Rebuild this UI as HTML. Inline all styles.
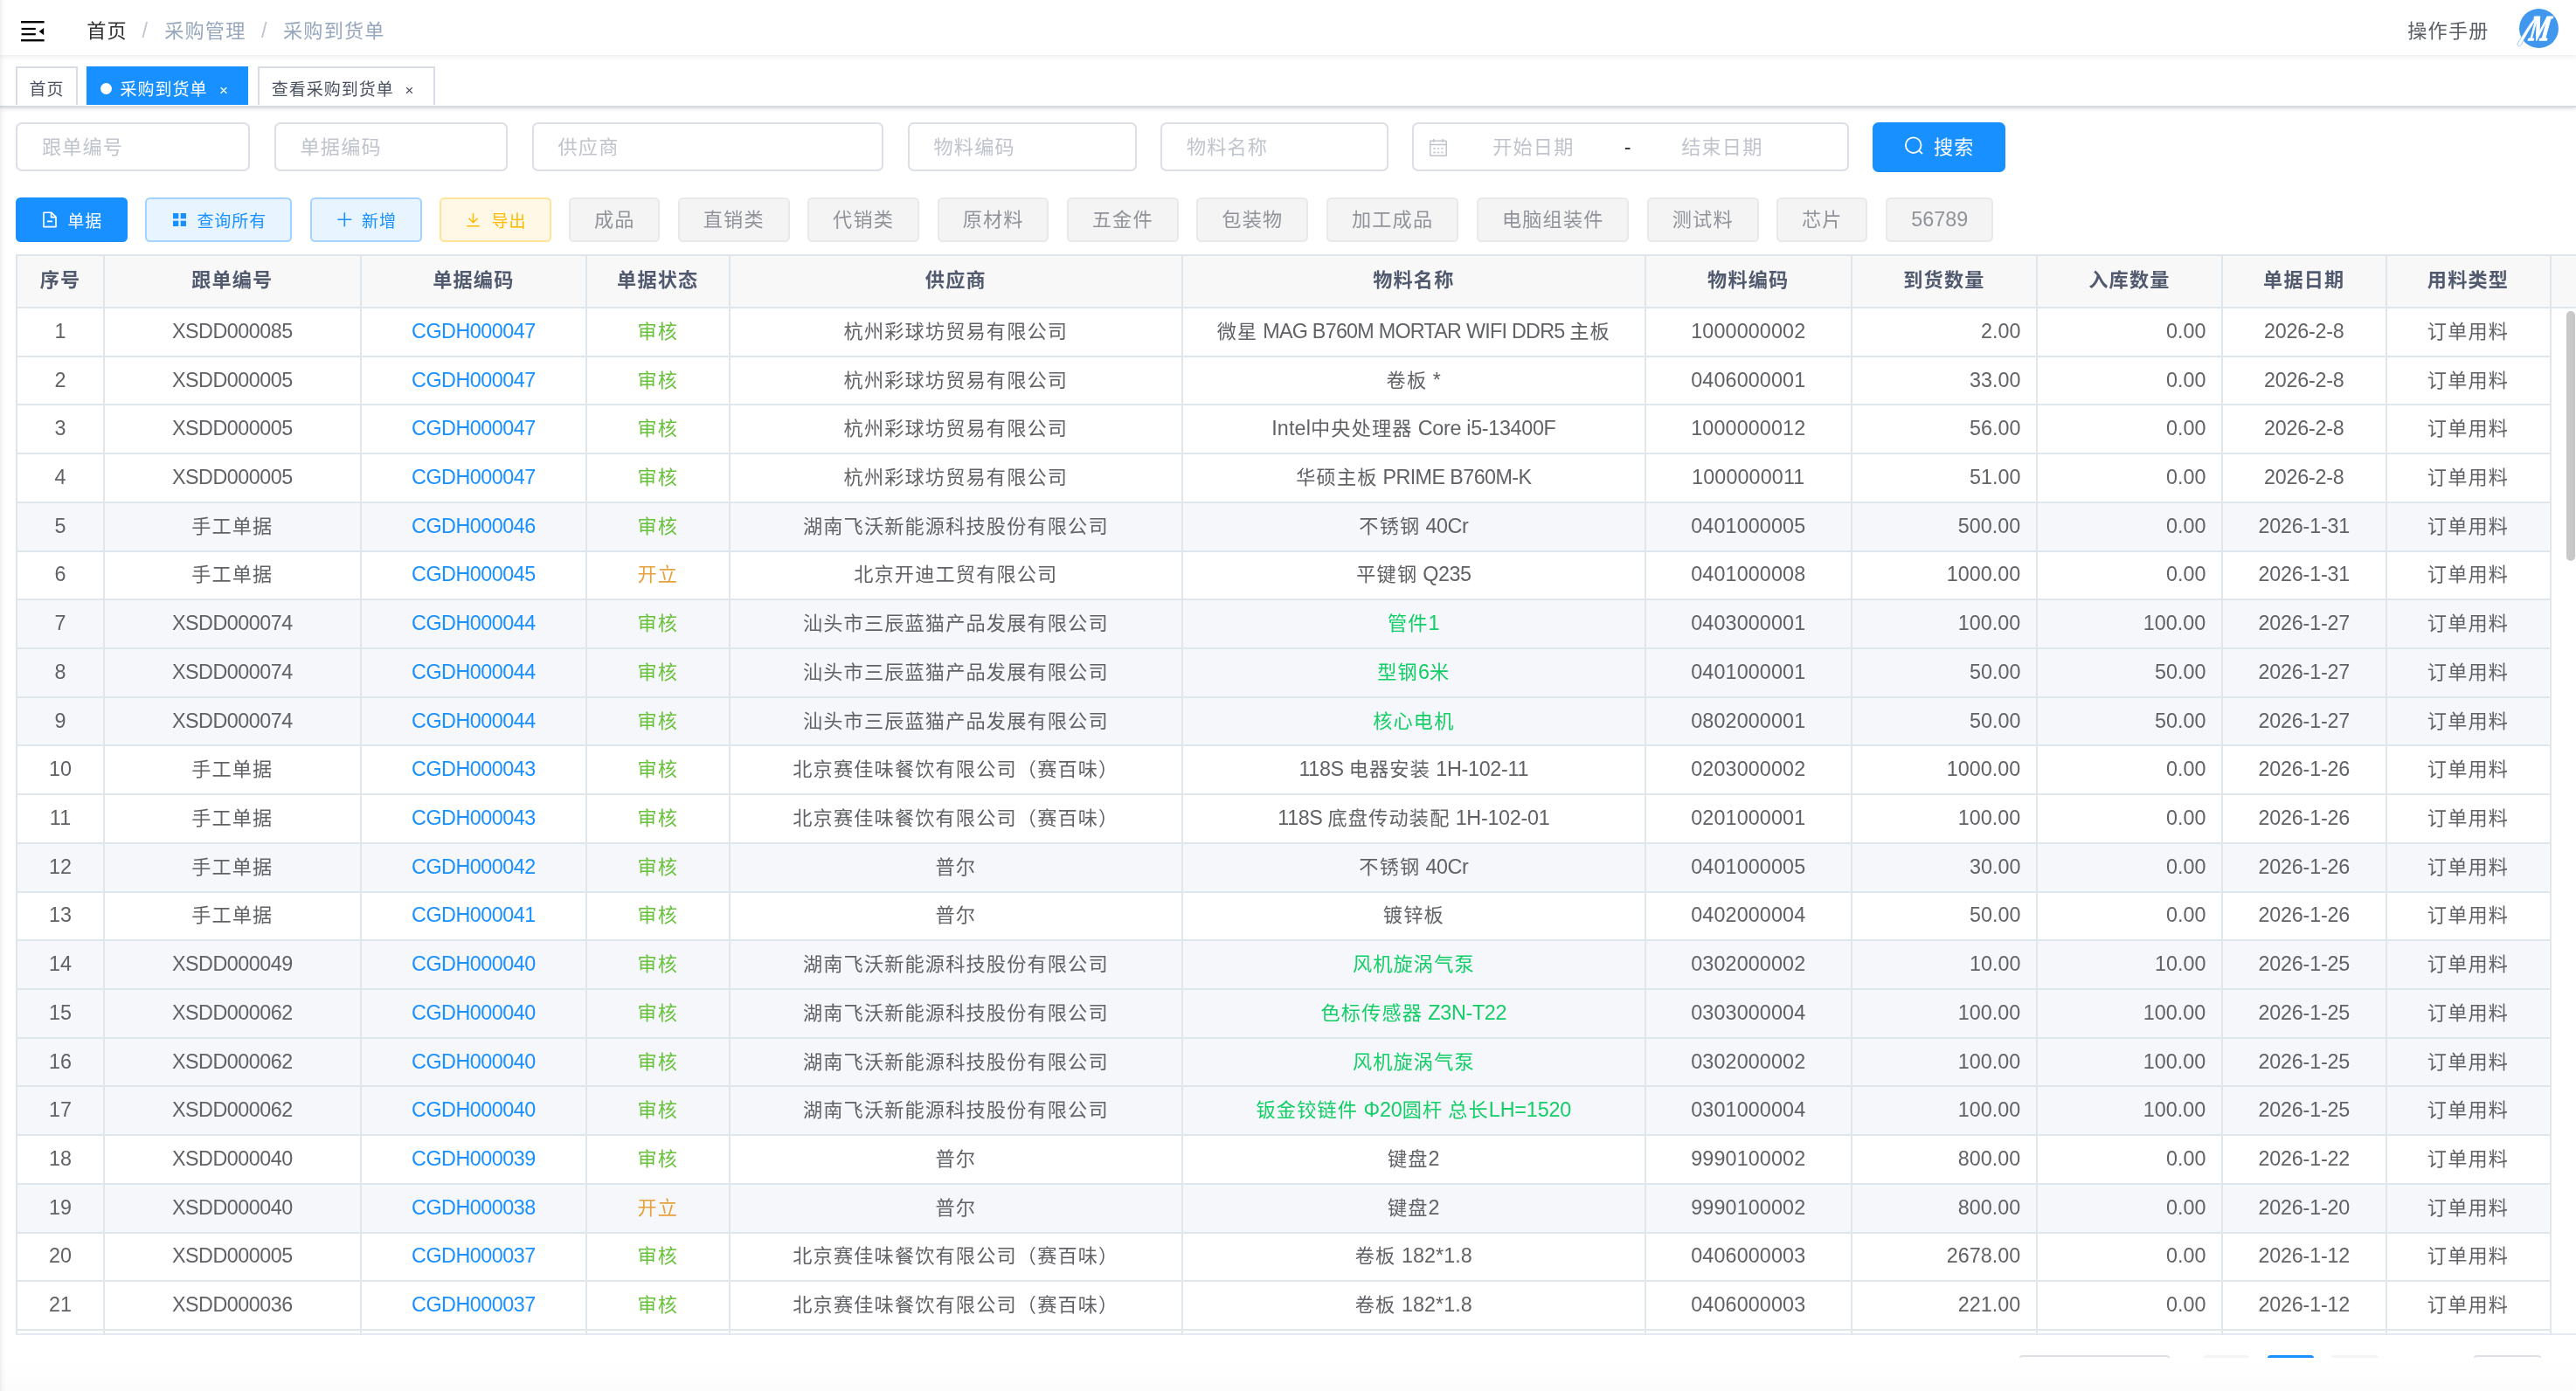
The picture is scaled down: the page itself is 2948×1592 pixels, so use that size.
<!DOCTYPE html>
<html lang="zh-CN"><head><meta charset="utf-8"><title>采购到货单</title>
<style>
html,body{margin:0;padding:0}
body{width:2948px;height:1592px;overflow:hidden;background:#fff;position:relative;will-change:transform;
font-family:"Liberation Sans","Noto Sans CJK SC",sans-serif;font-size:23.33px;color:#606266}
.a{position:absolute;white-space:nowrap}
.k{font-size:.95em;letter-spacing:.0526em}
#nav{z-index:5;left:0;top:0;width:2948px;height:63px;background:#fff;box-shadow:0 1.7px 6.7px rgba(0,21,41,.105)}
#tags{left:0;top:63px;width:2948px;height:58px;background:#fff;border-bottom:2px solid #d5dae4;box-shadow:0 1.7px 5px 0 rgba(0,0,0,.135),0 0 5px 0 rgba(0,0,0,.04)}
#tw{left:0;top:0;width:2948px;height:57px;overflow:hidden}
.bc{top:0;height:70px;line-height:70px;z-index:6}
.z{z-index:6}
.t{top:1.5px}
.tag{top:13px;height:50px;line-height:48px;border:2px solid #d8dce5;background:#fff;color:#495060;font-size:20px;box-sizing:border-box}
.tag.on{background:#1890ff;border-color:#1890ff;color:#fff}
.inp{top:140.2px;height:56.2px;border:2px solid #dcdfe6;border-radius:6.7px;background:#fff;color:#c0c4cc;line-height:52.6px;box-sizing:border-box}
.btn{top:226px;height:50.8px;line-height:46.8px;border:2px solid;border-radius:5.5px;text-align:center;font-size:20px;box-sizing:border-box}
.g{background:#f4f4f5;border-color:#e9e9eb;color:#909399;font-size:23.33px}
.hl{left:18px;height:2px;background:#dfe6ec}
.vl{width:2px;background:#dfe6ec}
.c{height:56px;line-height:56px;text-align:center;overflow:hidden}
.h{font-weight:bold;color:#515a6e;height:58px;line-height:58px;text-align:center}
.r{text-align:right}
.b{color:#1890ff}.gr{color:#67c23a}.or{color:#e6a23c}.mg{color:#13ce66}
</style></head><body>

<div id="nav" class="a"></div>
<svg class="a z" style="left:24.4px;top:24px" width="27" height="24" viewBox="0 0 27 24"><g fill="#000"><rect x="0" y="0" width="26.6" height="2.4"/><rect x="0.6" y="7.9" width="16.2" height="2.2"/><rect x="0.6" y="14.1" width="16.2" height="2.2"/><rect x="0" y="21" width="26.6" height="2.4"/><path d="M26.2 7.9v8.4l-5.6-4.2z"/></g></svg>
<div class="a bc" style="left:99.2px;color:#303133"><span class="k">首页</span></div>
<div class="a bc" style="left:162.5px;color:#c0c4cc">/</div>
<div class="a bc" style="left:188.2px;color:#97a8be"><span class="k">采购管理</span></div>
<div class="a bc" style="left:299px;color:#c0c4cc">/</div>
<div class="a bc" style="left:324px;color:#97a8be"><span class="k">采购到货单</span></div>
<div class="a bc" style="left:2755.3px;color:#5a5e66"><span class="k">操作手册</span></div>
<div class="a z" style="left:2883px;top:9.8px;width:45.4px;height:45.4px;border-radius:50%;background:#4197ee"></div>
<svg class="a z" style="left:2876px;top:6px" width="60" height="54" viewBox="0 0 60 54"><path d="M4.800 44.500C10.500 34.500 17 23.500 24.500 14.500l2.300 1.600C20.500 25.500 14.500 35.500 9.800 44.300c-1.500 2.700-3.500 4.500-5 .2z" fill="#fff" stroke="#4197ee" stroke-width=".5"/><text x="0" y="0" fill="#fff" font-family="Liberation Serif,serif" font-style="italic" font-weight="bold" font-size="41" stroke="#fff" stroke-width="1.300" transform="translate(17.500 40) skewX(-9) scale(.64 1)">M</text></svg>
<div id="tags" class="a"><div id="tw" class="a">
<div class="a tag" style="left:18.2px;width:70.6px;text-align:center"><span class="k">首页</span></div>
<div class="a tag on" style="left:99px;width:184.8px"><span class="a" style="left:14px;top:16.5px;width:13.4px;height:13.4px;border-radius:50%;background:#fff"></span><span class="a" style="left:36.6px"><span class="k">采购到货单</span></span><span class="a" style="left:150px;top:2px;font-size:17px">×</span></div>
<div class="a tag" style="left:295px;width:202.5px"><span class="a" style="left:13.8px"><span class="k">查看采购到货单</span></span><span class="a" style="left:166.5px;top:2px;font-size:17px">×</span></div>
</div></div>
<div class="a inp" style="left:18.4px;width:267.9px"><span class="a" style="left:27.5px"><span class="k">跟单编号</span></span></div>
<div class="a inp" style="left:314px;width:267.2px"><span class="a" style="left:27.5px"><span class="k">单据编码</span></span></div>
<div class="a inp" style="left:609px;width:402.2px"><span class="a" style="left:27.5px"><span class="k">供应商</span></span></div>
<div class="a inp" style="left:1039px;width:261.6px"><span class="a" style="left:27.5px"><span class="k">物料编码</span></span></div>
<div class="a inp" style="left:1328.4px;width:260.9px"><span class="a" style="left:27.5px"><span class="k">物料名称</span></span></div>
<div class="a inp" style="left:1616.2px;width:499.4px"><span class="a" style="left:90px"><span class="k">开始日期</span></span><span class="a" style="left:240.5px;color:#303133">-</span><span class="a" style="left:306px"><span class="k">结束日期</span></span></div>
<svg class="a" style="left:1634px;top:157px" width="24" height="24" viewBox="0 0 24 24" fill="none" stroke="#c0c4cc" stroke-width="1.5"><rect x="2.750" y="4.150" width="18.450" height="17.200" rx="0.500"/><path d="M2.750 8.500h18.450M6.700 2v3.800M17.100 2v3.800M6.200 12.900h2.600M10.800 12.900h2.400M15.200 12.900h2.500M6.200 17.400h2.600M10.800 17.400h2.400M15.200 17.400h2.500"/></svg>
<div class="a" style="left:2143px;top:139.8px;width:152px;height:57.1px;border-radius:6.5px;background:#1890ff;color:#fff;line-height:57px"><svg class="a" style="left:35px;top:15.5px" width="25" height="25" viewBox="0 0 25 25" fill="none" stroke="#fff" stroke-width="1.8"><circle cx="11.7" cy="11.2" r="8.8"/><path d="M18.2 17.4l3.8 3.8"/></svg><span class="a" style="left:70px"><span class="k">搜索</span></span></div>
<div class="a btn" style="left:18.1px;width:127.8px;background:#1890ff;border-color:#1890ff;color:#fff"><svg class="a" style="left:28px;top:13px" width="20" height="22" viewBox="0 0 20 22" fill="none" stroke="#fff" stroke-width="1.7" stroke-linejoin="round"><path d="M2 2.250H10.900L16 7.400V18.550H2zM10.600 2.600V7.700H15.700M6 12.400H12"/></svg><span class="a t" style="left:57.2px"><span class="k">单据</span></span></div>
<div class="a btn" style="left:166.2px;width:168.3px;background:#e8f4ff;border-color:#a3d3ff;color:#1890ff"><svg class="a" style="left:29.5px;top:16.2px" width="16" height="16" viewBox="0 0 16 16" fill="#1890ff"><rect x="0" y="0" width="6.300" height="6.300"/><rect x="8.700" y="0" width="6.300" height="6.300"/><rect x="0" y="8.700" width="6.300" height="6.300"/><rect x="8.700" y="8.700" width="6.300" height="6.300"/></svg><span class="a t" style="left:57.2px"><span class="k">查询所有</span></span></div>
<div class="a btn" style="left:355.1px;width:127.5px;background:#e8f4ff;border-color:#a3d3ff;color:#1890ff"><svg class="a" style="left:28.700px;top:15.3px" width="17" height="17" viewBox="0 0 17 17" stroke="#1890ff" stroke-width="1.6"><path d="M8.300 0.300v15.900M0.300 8.300h15.900"/></svg><span class="a t" style="left:56.8px"><span class="k">新增</span></span></div>
<div class="a btn" style="left:503px;width:127.5px;background:#fff8e6;border-color:#ffe399;color:#ffba00"><svg class="a" style="left:28.200px;top:15px" width="17" height="18" viewBox="0 0 17 18" fill="none" stroke="#ffba00" stroke-width="1.5"><path d="M8.5 1v10.800M3.500 6.800l5 5 5-5M1.300 15.800h14.400"/></svg><span class="a t" style="left:57.4px"><span class="k">导出</span></span></div>
<div class="a btn g" style="left:651.2px;width:104.3px"><span class="k">成品</span></div>
<div class="a btn g" style="left:776px;width:127.5px"><span class="k">直销类</span></div>
<div class="a btn g" style="left:924px;width:128.2px"><span class="k">代销类</span></div>
<div class="a btn g" style="left:1073px;width:127.3px"><span class="k">原材料</span></div>
<div class="a btn g" style="left:1221px;width:127.5px"><span class="k">五金件</span></div>
<div class="a btn g" style="left:1369.2px;width:128.3px"><span class="k">包装物</span></div>
<div class="a btn g" style="left:1518px;width:151.2px"><span class="k">加工成品</span></div>
<div class="a btn g" style="left:1690.2px;width:174.2px"><span class="k">电脑组装件</span></div>
<div class="a btn g" style="left:1885px;width:127.5px"><span class="k">测试料</span></div>
<div class="a btn g" style="left:2033.2px;width:104.3px"><span class="k">芯片</span></div>
<div class="a btn g" style="left:2158.1px;width:123.4px">56789</div>
<div class="a" style="left:18.4px;top:291.3px;width:2930px;height:59.64999999999998px;background:#f8f8f9"></div>
<div class="a" style="left:18.4px;top:573.83px;width:2899.1px;height:56.72px;background:#f5f7fa"></div>
<div class="a" style="left:18.4px;top:685.27px;width:2899.1px;height:56.72px;background:#f5f7fa"></div>
<div class="a" style="left:18.4px;top:740.99px;width:2899.1px;height:56.72px;background:#f5f7fa"></div>
<div class="a" style="left:18.4px;top:796.71px;width:2899.1px;height:56.72px;background:#f5f7fa"></div>
<div class="a" style="left:18.4px;top:963.87px;width:2899.1px;height:56.72px;background:#f5f7fa"></div>
<div class="a" style="left:18.4px;top:1075.31px;width:2899.1px;height:56.72px;background:#f5f7fa"></div>
<div class="a" style="left:18.4px;top:1131.03px;width:2899.1px;height:56.72px;background:#f5f7fa"></div>
<div class="a" style="left:18.4px;top:1186.75px;width:2899.1px;height:56.72px;background:#f5f7fa"></div>
<div class="a" style="left:18.4px;top:1242.47px;width:2899.1px;height:56.72px;background:#f5f7fa"></div>
<div class="a" style="left:18.4px;top:1353.91px;width:2899.1px;height:56.72px;background:#f5f7fa"></div>
<div class="a h" style="left:20.2px;top:291.30px;width:97.7px"><span class="k">序号</span></div>
<div class="a h" style="left:119.7px;top:291.30px;width:292.2px"><span class="k">跟单编号</span></div>
<div class="a h" style="left:413.7px;top:291.30px;width:256.3px"><span class="k">单据编码</span></div>
<div class="a h" style="left:671.8px;top:291.30px;width:161.9px"><span class="k">单据状态</span></div>
<div class="a h" style="left:835.5px;top:291.30px;width:516.7px"><span class="k">供应商</span></div>
<div class="a h" style="left:1354.0px;top:291.30px;width:527.7px"><span class="k">物料名称</span></div>
<div class="a h" style="left:1883.5px;top:291.30px;width:234.5px"><span class="k">物料编码</span></div>
<div class="a h" style="left:2119.8px;top:291.30px;width:210.2px"><span class="k">到货数量</span></div>
<div class="a h" style="left:2331.8px;top:291.30px;width:210.2px"><span class="k">入库数量</span></div>
<div class="a h" style="left:2543.8px;top:291.30px;width:185.9px"><span class="k">单据日期</span></div>
<div class="a h" style="left:2731.5px;top:291.30px;width:186.0px"><span class="k">用料类型</span></div>
<div class="a c" style="left:20.2px;top:351px;width:97.7px"><span style="letter-spacing:0.0054em">1</span></div>
<div class="a c" style="left:119.7px;top:351px;width:292.2px"><span style="letter-spacing:-0.0214em">XSDD000085</span></div>
<div class="a c b" style="left:413.7px;top:351px;width:256.3px"><span style="letter-spacing:-0.0211em">CGDH000047</span></div>
<div class="a c gr" style="left:671.8px;top:351px;width:161.9px"><span class="k">审核</span></div>
<div class="a c" style="left:835.5px;top:351px;width:516.7px"><span class="k">杭州彩球坊贸易有限公司</span></div>
<div class="a c" style="left:1354.0px;top:351px;width:527.7px"><span class="k">微星</span><span style="letter-spacing:-0.0319em"> MAG B760M MORTAR WIFI DDR5 </span><span class="k">主板</span></div>
<div class="a c" style="left:1883.5px;top:351px;width:234.5px"><span style="letter-spacing:0.0054em">1000000002</span></div>
<div class="a c r" style="left:2119.8px;top:351px;width:192.6px">2.00</div>
<div class="a c r" style="left:2331.8px;top:351px;width:192.6px">0.00</div>
<div class="a c" style="left:2543.8px;top:351px;width:185.9px"><span style="letter-spacing:-0.0103em">2026-2-8</span></div>
<div class="a c" style="left:2731.5px;top:351px;width:186.0px"><span class="k">订单用料</span></div>
<div class="a c" style="left:20.2px;top:407px;width:97.7px"><span style="letter-spacing:0.0054em">2</span></div>
<div class="a c" style="left:119.7px;top:407px;width:292.2px"><span style="letter-spacing:-0.0214em">XSDD000005</span></div>
<div class="a c b" style="left:413.7px;top:407px;width:256.3px"><span style="letter-spacing:-0.0211em">CGDH000047</span></div>
<div class="a c gr" style="left:671.8px;top:407px;width:161.9px"><span class="k">审核</span></div>
<div class="a c" style="left:835.5px;top:407px;width:516.7px"><span class="k">杭州彩球坊贸易有限公司</span></div>
<div class="a c" style="left:1354.0px;top:407px;width:527.7px"><span class="k">卷板</span><span style="letter-spacing:0.0056em"> *</span></div>
<div class="a c" style="left:1883.5px;top:407px;width:234.5px"><span style="letter-spacing:0.0054em">0406000001</span></div>
<div class="a c r" style="left:2119.8px;top:407px;width:192.6px">33.00</div>
<div class="a c r" style="left:2331.8px;top:407px;width:192.6px">0.00</div>
<div class="a c" style="left:2543.8px;top:407px;width:185.9px"><span style="letter-spacing:-0.0103em">2026-2-8</span></div>
<div class="a c" style="left:2731.5px;top:407px;width:186.0px"><span class="k">订单用料</span></div>
<div class="a c" style="left:20.2px;top:462px;width:97.7px"><span style="letter-spacing:0.0054em">3</span></div>
<div class="a c" style="left:119.7px;top:462px;width:292.2px"><span style="letter-spacing:-0.0214em">XSDD000005</span></div>
<div class="a c b" style="left:413.7px;top:462px;width:256.3px"><span style="letter-spacing:-0.0211em">CGDH000047</span></div>
<div class="a c gr" style="left:671.8px;top:462px;width:161.9px"><span class="k">审核</span></div>
<div class="a c" style="left:835.5px;top:462px;width:516.7px"><span class="k">杭州彩球坊贸易有限公司</span></div>
<div class="a c" style="left:1354.0px;top:462px;width:527.7px"><span style="letter-spacing:0.0065em">Intel</span><span class="k">中央处理器</span><span style="letter-spacing:-0.0134em"> Core i5-13400F</span></div>
<div class="a c" style="left:1883.5px;top:462px;width:234.5px"><span style="letter-spacing:0.0054em">1000000012</span></div>
<div class="a c r" style="left:2119.8px;top:462px;width:192.6px">56.00</div>
<div class="a c r" style="left:2331.8px;top:462px;width:192.6px">0.00</div>
<div class="a c" style="left:2543.8px;top:462px;width:185.9px"><span style="letter-spacing:-0.0103em">2026-2-8</span></div>
<div class="a c" style="left:2731.5px;top:462px;width:186.0px"><span class="k">订单用料</span></div>
<div class="a c" style="left:20.2px;top:518px;width:97.7px"><span style="letter-spacing:0.0054em">4</span></div>
<div class="a c" style="left:119.7px;top:518px;width:292.2px"><span style="letter-spacing:-0.0214em">XSDD000005</span></div>
<div class="a c b" style="left:413.7px;top:518px;width:256.3px"><span style="letter-spacing:-0.0211em">CGDH000047</span></div>
<div class="a c gr" style="left:671.8px;top:518px;width:161.9px"><span class="k">审核</span></div>
<div class="a c" style="left:835.5px;top:518px;width:516.7px"><span class="k">杭州彩球坊贸易有限公司</span></div>
<div class="a c" style="left:1354.0px;top:518px;width:527.7px"><span class="k">华硕主板</span><span style="letter-spacing:-0.0252em"> PRIME B760M-K</span></div>
<div class="a c" style="left:1883.5px;top:518px;width:234.5px"><span style="letter-spacing:0.0054em">1000000011</span></div>
<div class="a c r" style="left:2119.8px;top:518px;width:192.6px">51.00</div>
<div class="a c r" style="left:2331.8px;top:518px;width:192.6px">0.00</div>
<div class="a c" style="left:2543.8px;top:518px;width:185.9px"><span style="letter-spacing:-0.0103em">2026-2-8</span></div>
<div class="a c" style="left:2731.5px;top:518px;width:186.0px"><span class="k">订单用料</span></div>
<div class="a c" style="left:20.2px;top:574px;width:97.7px"><span style="letter-spacing:0.0054em">5</span></div>
<div class="a c" style="left:119.7px;top:574px;width:292.2px"><span class="k">手工单据</span></div>
<div class="a c b" style="left:413.7px;top:574px;width:256.3px"><span style="letter-spacing:-0.0211em">CGDH000046</span></div>
<div class="a c gr" style="left:671.8px;top:574px;width:161.9px"><span class="k">审核</span></div>
<div class="a c" style="left:835.5px;top:574px;width:516.7px"><span class="k">湖南飞沃新能源科技股份有限公司</span></div>
<div class="a c" style="left:1354.0px;top:574px;width:527.7px"><span class="k">不锈钢</span><span style="letter-spacing:-0.0171em"> 40Cr</span></div>
<div class="a c" style="left:1883.5px;top:574px;width:234.5px"><span style="letter-spacing:0.0054em">0401000005</span></div>
<div class="a c r" style="left:2119.8px;top:574px;width:192.6px"><span style="letter-spacing:0.0020em">500.00</span></div>
<div class="a c r" style="left:2331.8px;top:574px;width:192.6px">0.00</div>
<div class="a c" style="left:2543.8px;top:574px;width:185.9px"><span style="letter-spacing:-0.0085em">2026-1-31</span></div>
<div class="a c" style="left:2731.5px;top:574px;width:186.0px"><span class="k">订单用料</span></div>
<div class="a c" style="left:20.2px;top:629px;width:97.7px"><span style="letter-spacing:0.0054em">6</span></div>
<div class="a c" style="left:119.7px;top:629px;width:292.2px"><span class="k">手工单据</span></div>
<div class="a c b" style="left:413.7px;top:629px;width:256.3px"><span style="letter-spacing:-0.0211em">CGDH000045</span></div>
<div class="a c or" style="left:671.8px;top:629px;width:161.9px"><span class="k">开立</span></div>
<div class="a c" style="left:835.5px;top:629px;width:516.7px"><span class="k">北京开迪工贸有限公司</span></div>
<div class="a c" style="left:1354.0px;top:629px;width:527.7px"><span class="k">平键钢</span><span style="letter-spacing:-0.0209em"> Q235</span></div>
<div class="a c" style="left:1883.5px;top:629px;width:234.5px"><span style="letter-spacing:0.0054em">0401000008</span></div>
<div class="a c r" style="left:2119.8px;top:629px;width:192.6px"><span style="letter-spacing:0.0025em">1000.00</span></div>
<div class="a c r" style="left:2331.8px;top:629px;width:192.6px">0.00</div>
<div class="a c" style="left:2543.8px;top:629px;width:185.9px"><span style="letter-spacing:-0.0085em">2026-1-31</span></div>
<div class="a c" style="left:2731.5px;top:629px;width:186.0px"><span class="k">订单用料</span></div>
<div class="a c" style="left:20.2px;top:685px;width:97.7px"><span style="letter-spacing:0.0054em">7</span></div>
<div class="a c" style="left:119.7px;top:685px;width:292.2px"><span style="letter-spacing:-0.0214em">XSDD000074</span></div>
<div class="a c b" style="left:413.7px;top:685px;width:256.3px"><span style="letter-spacing:-0.0211em">CGDH000044</span></div>
<div class="a c gr" style="left:671.8px;top:685px;width:161.9px"><span class="k">审核</span></div>
<div class="a c" style="left:835.5px;top:685px;width:516.7px"><span class="k">汕头市三辰蓝猫产品发展有限公司</span></div>
<div class="a c mg" style="left:1354.0px;top:685px;width:527.7px"><span class="k">管件</span><span style="letter-spacing:0.0054em">1</span></div>
<div class="a c" style="left:1883.5px;top:685px;width:234.5px"><span style="letter-spacing:0.0054em">0403000001</span></div>
<div class="a c r" style="left:2119.8px;top:685px;width:192.6px"><span style="letter-spacing:0.0020em">100.00</span></div>
<div class="a c r" style="left:2331.8px;top:685px;width:192.6px"><span style="letter-spacing:0.0020em">100.00</span></div>
<div class="a c" style="left:2543.8px;top:685px;width:185.9px"><span style="letter-spacing:-0.0085em">2026-1-27</span></div>
<div class="a c" style="left:2731.5px;top:685px;width:186.0px"><span class="k">订单用料</span></div>
<div class="a c" style="left:20.2px;top:741px;width:97.7px"><span style="letter-spacing:0.0054em">8</span></div>
<div class="a c" style="left:119.7px;top:741px;width:292.2px"><span style="letter-spacing:-0.0214em">XSDD000074</span></div>
<div class="a c b" style="left:413.7px;top:741px;width:256.3px"><span style="letter-spacing:-0.0211em">CGDH000044</span></div>
<div class="a c gr" style="left:671.8px;top:741px;width:161.9px"><span class="k">审核</span></div>
<div class="a c" style="left:835.5px;top:741px;width:516.7px"><span class="k">汕头市三辰蓝猫产品发展有限公司</span></div>
<div class="a c mg" style="left:1354.0px;top:741px;width:527.7px"><span class="k">型钢</span><span style="letter-spacing:0.0054em">6</span><span class="k">米</span></div>
<div class="a c" style="left:1883.5px;top:741px;width:234.5px"><span style="letter-spacing:0.0054em">0401000001</span></div>
<div class="a c r" style="left:2119.8px;top:741px;width:192.6px">50.00</div>
<div class="a c r" style="left:2331.8px;top:741px;width:192.6px">50.00</div>
<div class="a c" style="left:2543.8px;top:741px;width:185.9px"><span style="letter-spacing:-0.0085em">2026-1-27</span></div>
<div class="a c" style="left:2731.5px;top:741px;width:186.0px"><span class="k">订单用料</span></div>
<div class="a c" style="left:20.2px;top:797px;width:97.7px"><span style="letter-spacing:0.0054em">9</span></div>
<div class="a c" style="left:119.7px;top:797px;width:292.2px"><span style="letter-spacing:-0.0214em">XSDD000074</span></div>
<div class="a c b" style="left:413.7px;top:797px;width:256.3px"><span style="letter-spacing:-0.0211em">CGDH000044</span></div>
<div class="a c gr" style="left:671.8px;top:797px;width:161.9px"><span class="k">审核</span></div>
<div class="a c" style="left:835.5px;top:797px;width:516.7px"><span class="k">汕头市三辰蓝猫产品发展有限公司</span></div>
<div class="a c mg" style="left:1354.0px;top:797px;width:527.7px"><span class="k">核心电机</span></div>
<div class="a c" style="left:1883.5px;top:797px;width:234.5px"><span style="letter-spacing:0.0054em">0802000001</span></div>
<div class="a c r" style="left:2119.8px;top:797px;width:192.6px">50.00</div>
<div class="a c r" style="left:2331.8px;top:797px;width:192.6px">50.00</div>
<div class="a c" style="left:2543.8px;top:797px;width:185.9px"><span style="letter-spacing:-0.0085em">2026-1-27</span></div>
<div class="a c" style="left:2731.5px;top:797px;width:186.0px"><span class="k">订单用料</span></div>
<div class="a c" style="left:20.2px;top:852px;width:97.7px"><span style="letter-spacing:0.0054em">10</span></div>
<div class="a c" style="left:119.7px;top:852px;width:292.2px"><span class="k">手工单据</span></div>
<div class="a c b" style="left:413.7px;top:852px;width:256.3px"><span style="letter-spacing:-0.0211em">CGDH000043</span></div>
<div class="a c gr" style="left:671.8px;top:852px;width:161.9px"><span class="k">审核</span></div>
<div class="a c" style="left:835.5px;top:852px;width:516.7px"><span class="k">北京赛佳味餐饮有限公司（赛百味）</span></div>
<div class="a c" style="left:1354.0px;top:852px;width:527.7px"><span style="letter-spacing:-0.0176em">118S </span><span class="k">电器安装</span><span style="letter-spacing:-0.0122em"> 1H-102-11</span></div>
<div class="a c" style="left:1883.5px;top:852px;width:234.5px"><span style="letter-spacing:0.0054em">0203000002</span></div>
<div class="a c r" style="left:2119.8px;top:852px;width:192.6px"><span style="letter-spacing:0.0025em">1000.00</span></div>
<div class="a c r" style="left:2331.8px;top:852px;width:192.6px">0.00</div>
<div class="a c" style="left:2543.8px;top:852px;width:185.9px"><span style="letter-spacing:-0.0085em">2026-1-26</span></div>
<div class="a c" style="left:2731.5px;top:852px;width:186.0px"><span class="k">订单用料</span></div>
<div class="a c" style="left:20.2px;top:908px;width:97.7px"><span style="letter-spacing:0.0054em">11</span></div>
<div class="a c" style="left:119.7px;top:908px;width:292.2px"><span class="k">手工单据</span></div>
<div class="a c b" style="left:413.7px;top:908px;width:256.3px"><span style="letter-spacing:-0.0211em">CGDH000043</span></div>
<div class="a c gr" style="left:671.8px;top:908px;width:161.9px"><span class="k">审核</span></div>
<div class="a c" style="left:835.5px;top:908px;width:516.7px"><span class="k">北京赛佳味餐饮有限公司（赛百味）</span></div>
<div class="a c" style="left:1354.0px;top:908px;width:527.7px"><span style="letter-spacing:-0.0176em">118S </span><span class="k">底盘传动装配</span><span style="letter-spacing:-0.0122em"> 1H-102-01</span></div>
<div class="a c" style="left:1883.5px;top:908px;width:234.5px"><span style="letter-spacing:0.0054em">0201000001</span></div>
<div class="a c r" style="left:2119.8px;top:908px;width:192.6px"><span style="letter-spacing:0.0020em">100.00</span></div>
<div class="a c r" style="left:2331.8px;top:908px;width:192.6px">0.00</div>
<div class="a c" style="left:2543.8px;top:908px;width:185.9px"><span style="letter-spacing:-0.0085em">2026-1-26</span></div>
<div class="a c" style="left:2731.5px;top:908px;width:186.0px"><span class="k">订单用料</span></div>
<div class="a c" style="left:20.2px;top:964px;width:97.7px"><span style="letter-spacing:0.0054em">12</span></div>
<div class="a c" style="left:119.7px;top:964px;width:292.2px"><span class="k">手工单据</span></div>
<div class="a c b" style="left:413.7px;top:964px;width:256.3px"><span style="letter-spacing:-0.0211em">CGDH000042</span></div>
<div class="a c gr" style="left:671.8px;top:964px;width:161.9px"><span class="k">审核</span></div>
<div class="a c" style="left:835.5px;top:964px;width:516.7px"><span class="k">普尔</span></div>
<div class="a c" style="left:1354.0px;top:964px;width:527.7px"><span class="k">不锈钢</span><span style="letter-spacing:-0.0171em"> 40Cr</span></div>
<div class="a c" style="left:1883.5px;top:964px;width:234.5px"><span style="letter-spacing:0.0054em">0401000005</span></div>
<div class="a c r" style="left:2119.8px;top:964px;width:192.6px">30.00</div>
<div class="a c r" style="left:2331.8px;top:964px;width:192.6px">0.00</div>
<div class="a c" style="left:2543.8px;top:964px;width:185.9px"><span style="letter-spacing:-0.0085em">2026-1-26</span></div>
<div class="a c" style="left:2731.5px;top:964px;width:186.0px"><span class="k">订单用料</span></div>
<div class="a c" style="left:20.2px;top:1019px;width:97.7px"><span style="letter-spacing:0.0054em">13</span></div>
<div class="a c" style="left:119.7px;top:1019px;width:292.2px"><span class="k">手工单据</span></div>
<div class="a c b" style="left:413.7px;top:1019px;width:256.3px"><span style="letter-spacing:-0.0211em">CGDH000041</span></div>
<div class="a c gr" style="left:671.8px;top:1019px;width:161.9px"><span class="k">审核</span></div>
<div class="a c" style="left:835.5px;top:1019px;width:516.7px"><span class="k">普尔</span></div>
<div class="a c" style="left:1354.0px;top:1019px;width:527.7px"><span class="k">镀锌板</span></div>
<div class="a c" style="left:1883.5px;top:1019px;width:234.5px"><span style="letter-spacing:0.0054em">0402000004</span></div>
<div class="a c r" style="left:2119.8px;top:1019px;width:192.6px">50.00</div>
<div class="a c r" style="left:2331.8px;top:1019px;width:192.6px">0.00</div>
<div class="a c" style="left:2543.8px;top:1019px;width:185.9px"><span style="letter-spacing:-0.0085em">2026-1-26</span></div>
<div class="a c" style="left:2731.5px;top:1019px;width:186.0px"><span class="k">订单用料</span></div>
<div class="a c" style="left:20.2px;top:1075px;width:97.7px"><span style="letter-spacing:0.0054em">14</span></div>
<div class="a c" style="left:119.7px;top:1075px;width:292.2px"><span style="letter-spacing:-0.0214em">XSDD000049</span></div>
<div class="a c b" style="left:413.7px;top:1075px;width:256.3px"><span style="letter-spacing:-0.0211em">CGDH000040</span></div>
<div class="a c gr" style="left:671.8px;top:1075px;width:161.9px"><span class="k">审核</span></div>
<div class="a c" style="left:835.5px;top:1075px;width:516.7px"><span class="k">湖南飞沃新能源科技股份有限公司</span></div>
<div class="a c mg" style="left:1354.0px;top:1075px;width:527.7px"><span class="k">风机旋涡气泵</span></div>
<div class="a c" style="left:1883.5px;top:1075px;width:234.5px"><span style="letter-spacing:0.0054em">0302000002</span></div>
<div class="a c r" style="left:2119.8px;top:1075px;width:192.6px">10.00</div>
<div class="a c r" style="left:2331.8px;top:1075px;width:192.6px">10.00</div>
<div class="a c" style="left:2543.8px;top:1075px;width:185.9px"><span style="letter-spacing:-0.0085em">2026-1-25</span></div>
<div class="a c" style="left:2731.5px;top:1075px;width:186.0px"><span class="k">订单用料</span></div>
<div class="a c" style="left:20.2px;top:1131px;width:97.7px"><span style="letter-spacing:0.0054em">15</span></div>
<div class="a c" style="left:119.7px;top:1131px;width:292.2px"><span style="letter-spacing:-0.0214em">XSDD000062</span></div>
<div class="a c b" style="left:413.7px;top:1131px;width:256.3px"><span style="letter-spacing:-0.0211em">CGDH000040</span></div>
<div class="a c gr" style="left:671.8px;top:1131px;width:161.9px"><span class="k">审核</span></div>
<div class="a c" style="left:835.5px;top:1131px;width:516.7px"><span class="k">湖南飞沃新能源科技股份有限公司</span></div>
<div class="a c mg" style="left:1354.0px;top:1131px;width:527.7px"><span class="k">色标传感器</span><span style="letter-spacing:-0.0134em"> Z3N-T22</span></div>
<div class="a c" style="left:1883.5px;top:1131px;width:234.5px"><span style="letter-spacing:0.0054em">0303000004</span></div>
<div class="a c r" style="left:2119.8px;top:1131px;width:192.6px"><span style="letter-spacing:0.0020em">100.00</span></div>
<div class="a c r" style="left:2331.8px;top:1131px;width:192.6px"><span style="letter-spacing:0.0020em">100.00</span></div>
<div class="a c" style="left:2543.8px;top:1131px;width:185.9px"><span style="letter-spacing:-0.0085em">2026-1-25</span></div>
<div class="a c" style="left:2731.5px;top:1131px;width:186.0px"><span class="k">订单用料</span></div>
<div class="a c" style="left:20.2px;top:1187px;width:97.7px"><span style="letter-spacing:0.0054em">16</span></div>
<div class="a c" style="left:119.7px;top:1187px;width:292.2px"><span style="letter-spacing:-0.0214em">XSDD000062</span></div>
<div class="a c b" style="left:413.7px;top:1187px;width:256.3px"><span style="letter-spacing:-0.0211em">CGDH000040</span></div>
<div class="a c gr" style="left:671.8px;top:1187px;width:161.9px"><span class="k">审核</span></div>
<div class="a c" style="left:835.5px;top:1187px;width:516.7px"><span class="k">湖南飞沃新能源科技股份有限公司</span></div>
<div class="a c mg" style="left:1354.0px;top:1187px;width:527.7px"><span class="k">风机旋涡气泵</span></div>
<div class="a c" style="left:1883.5px;top:1187px;width:234.5px"><span style="letter-spacing:0.0054em">0302000002</span></div>
<div class="a c r" style="left:2119.8px;top:1187px;width:192.6px"><span style="letter-spacing:0.0020em">100.00</span></div>
<div class="a c r" style="left:2331.8px;top:1187px;width:192.6px"><span style="letter-spacing:0.0020em">100.00</span></div>
<div class="a c" style="left:2543.8px;top:1187px;width:185.9px"><span style="letter-spacing:-0.0085em">2026-1-25</span></div>
<div class="a c" style="left:2731.5px;top:1187px;width:186.0px"><span class="k">订单用料</span></div>
<div class="a c" style="left:20.2px;top:1242px;width:97.7px"><span style="letter-spacing:0.0054em">17</span></div>
<div class="a c" style="left:119.7px;top:1242px;width:292.2px"><span style="letter-spacing:-0.0214em">XSDD000062</span></div>
<div class="a c b" style="left:413.7px;top:1242px;width:256.3px"><span style="letter-spacing:-0.0211em">CGDH000040</span></div>
<div class="a c gr" style="left:671.8px;top:1242px;width:161.9px"><span class="k">审核</span></div>
<div class="a c" style="left:835.5px;top:1242px;width:516.7px"><span class="k">湖南飞沃新能源科技股份有限公司</span></div>
<div class="a c mg" style="left:1354.0px;top:1242px;width:527.7px"><span class="k">钣金铰链件</span><span style="letter-spacing:-0.0049em"> Φ20</span><span class="k">圆杆</span><span style="letter-spacing:-0.0303em"> </span><span class="k">总长</span><span style="letter-spacing:-0.0059em">LH=1520</span></div>
<div class="a c" style="left:1883.5px;top:1242px;width:234.5px"><span style="letter-spacing:0.0054em">0301000004</span></div>
<div class="a c r" style="left:2119.8px;top:1242px;width:192.6px"><span style="letter-spacing:0.0020em">100.00</span></div>
<div class="a c r" style="left:2331.8px;top:1242px;width:192.6px"><span style="letter-spacing:0.0020em">100.00</span></div>
<div class="a c" style="left:2543.8px;top:1242px;width:185.9px"><span style="letter-spacing:-0.0085em">2026-1-25</span></div>
<div class="a c" style="left:2731.5px;top:1242px;width:186.0px"><span class="k">订单用料</span></div>
<div class="a c" style="left:20.2px;top:1298px;width:97.7px"><span style="letter-spacing:0.0054em">18</span></div>
<div class="a c" style="left:119.7px;top:1298px;width:292.2px"><span style="letter-spacing:-0.0214em">XSDD000040</span></div>
<div class="a c b" style="left:413.7px;top:1298px;width:256.3px"><span style="letter-spacing:-0.0211em">CGDH000039</span></div>
<div class="a c gr" style="left:671.8px;top:1298px;width:161.9px"><span class="k">审核</span></div>
<div class="a c" style="left:835.5px;top:1298px;width:516.7px"><span class="k">普尔</span></div>
<div class="a c" style="left:1354.0px;top:1298px;width:527.7px"><span class="k">键盘</span><span style="letter-spacing:0.0054em">2</span></div>
<div class="a c" style="left:1883.5px;top:1298px;width:234.5px"><span style="letter-spacing:0.0054em">9990100002</span></div>
<div class="a c r" style="left:2119.8px;top:1298px;width:192.6px"><span style="letter-spacing:0.0020em">800.00</span></div>
<div class="a c r" style="left:2331.8px;top:1298px;width:192.6px">0.00</div>
<div class="a c" style="left:2543.8px;top:1298px;width:185.9px"><span style="letter-spacing:-0.0085em">2026-1-22</span></div>
<div class="a c" style="left:2731.5px;top:1298px;width:186.0px"><span class="k">订单用料</span></div>
<div class="a c" style="left:20.2px;top:1354px;width:97.7px"><span style="letter-spacing:0.0054em">19</span></div>
<div class="a c" style="left:119.7px;top:1354px;width:292.2px"><span style="letter-spacing:-0.0214em">XSDD000040</span></div>
<div class="a c b" style="left:413.7px;top:1354px;width:256.3px"><span style="letter-spacing:-0.0211em">CGDH000038</span></div>
<div class="a c or" style="left:671.8px;top:1354px;width:161.9px"><span class="k">开立</span></div>
<div class="a c" style="left:835.5px;top:1354px;width:516.7px"><span class="k">普尔</span></div>
<div class="a c" style="left:1354.0px;top:1354px;width:527.7px"><span class="k">键盘</span><span style="letter-spacing:0.0054em">2</span></div>
<div class="a c" style="left:1883.5px;top:1354px;width:234.5px"><span style="letter-spacing:0.0054em">9990100002</span></div>
<div class="a c r" style="left:2119.8px;top:1354px;width:192.6px"><span style="letter-spacing:0.0020em">800.00</span></div>
<div class="a c r" style="left:2331.8px;top:1354px;width:192.6px">0.00</div>
<div class="a c" style="left:2543.8px;top:1354px;width:185.9px"><span style="letter-spacing:-0.0085em">2026-1-20</span></div>
<div class="a c" style="left:2731.5px;top:1354px;width:186.0px"><span class="k">订单用料</span></div>
<div class="a c" style="left:20.2px;top:1409px;width:97.7px"><span style="letter-spacing:0.0054em">20</span></div>
<div class="a c" style="left:119.7px;top:1409px;width:292.2px"><span style="letter-spacing:-0.0214em">XSDD000005</span></div>
<div class="a c b" style="left:413.7px;top:1409px;width:256.3px"><span style="letter-spacing:-0.0211em">CGDH000037</span></div>
<div class="a c gr" style="left:671.8px;top:1409px;width:161.9px"><span class="k">审核</span></div>
<div class="a c" style="left:835.5px;top:1409px;width:516.7px"><span class="k">北京赛佳味餐饮有限公司（赛百味）</span></div>
<div class="a c" style="left:1354.0px;top:1409px;width:527.7px"><span class="k">卷板</span><span style="letter-spacing:0.0029em"> 182*1.8</span></div>
<div class="a c" style="left:1883.5px;top:1409px;width:234.5px"><span style="letter-spacing:0.0054em">0406000003</span></div>
<div class="a c r" style="left:2119.8px;top:1409px;width:192.6px"><span style="letter-spacing:0.0025em">2678.00</span></div>
<div class="a c r" style="left:2331.8px;top:1409px;width:192.6px">0.00</div>
<div class="a c" style="left:2543.8px;top:1409px;width:185.9px"><span style="letter-spacing:-0.0085em">2026-1-12</span></div>
<div class="a c" style="left:2731.5px;top:1409px;width:186.0px"><span class="k">订单用料</span></div>
<div class="a c" style="left:20.2px;top:1465px;width:97.7px"><span style="letter-spacing:0.0054em">21</span></div>
<div class="a c" style="left:119.7px;top:1465px;width:292.2px"><span style="letter-spacing:-0.0214em">XSDD000036</span></div>
<div class="a c b" style="left:413.7px;top:1465px;width:256.3px"><span style="letter-spacing:-0.0211em">CGDH000037</span></div>
<div class="a c gr" style="left:671.8px;top:1465px;width:161.9px"><span class="k">审核</span></div>
<div class="a c" style="left:835.5px;top:1465px;width:516.7px"><span class="k">北京赛佳味餐饮有限公司（赛百味）</span></div>
<div class="a c" style="left:1354.0px;top:1465px;width:527.7px"><span class="k">卷板</span><span style="letter-spacing:0.0029em"> 182*1.8</span></div>
<div class="a c" style="left:1883.5px;top:1465px;width:234.5px"><span style="letter-spacing:0.0054em">0406000003</span></div>
<div class="a c r" style="left:2119.8px;top:1465px;width:192.6px"><span style="letter-spacing:0.0020em">221.00</span></div>
<div class="a c r" style="left:2331.8px;top:1465px;width:192.6px">0.00</div>
<div class="a c" style="left:2543.8px;top:1465px;width:185.9px"><span style="letter-spacing:-0.0085em">2026-1-12</span></div>
<div class="a c" style="left:2731.5px;top:1465px;width:186.0px"><span class="k">订单用料</span></div>
<div class="a hl" style="top:291px;width:2930px"></div>
<div class="a hl" style="top:351px;width:2930px"></div>
<div class="a hl" style="top:407px;width:2902px"></div>
<div class="a hl" style="top:462px;width:2902px"></div>
<div class="a hl" style="top:518px;width:2902px"></div>
<div class="a hl" style="top:574px;width:2902px"></div>
<div class="a hl" style="top:630px;width:2902px"></div>
<div class="a hl" style="top:685px;width:2902px"></div>
<div class="a hl" style="top:741px;width:2902px"></div>
<div class="a hl" style="top:797px;width:2902px"></div>
<div class="a hl" style="top:852px;width:2902px"></div>
<div class="a hl" style="top:908px;width:2902px"></div>
<div class="a hl" style="top:964px;width:2902px"></div>
<div class="a hl" style="top:1020px;width:2902px"></div>
<div class="a hl" style="top:1075px;width:2902px"></div>
<div class="a hl" style="top:1131px;width:2902px"></div>
<div class="a hl" style="top:1187px;width:2902px"></div>
<div class="a hl" style="top:1242px;width:2902px"></div>
<div class="a hl" style="top:1298px;width:2902px"></div>
<div class="a hl" style="top:1354px;width:2902px"></div>
<div class="a hl" style="top:1410px;width:2902px"></div>
<div class="a hl" style="top:1465px;width:2902px"></div>
<div class="a hl" style="top:1521px;width:2902px"></div>
<div class="a hl" style="top:1526px;width:2930px;background:#e4e9f2"></div>
<div class="a vl" style="left:18px;top:291px;height:1237px"></div>
<div class="a vl" style="left:118px;top:291px;height:1237px"></div>
<div class="a vl" style="left:412px;top:291px;height:1237px"></div>
<div class="a vl" style="left:670px;top:291px;height:1237px"></div>
<div class="a vl" style="left:834px;top:291px;height:1237px"></div>
<div class="a vl" style="left:1352px;top:291px;height:1237px"></div>
<div class="a vl" style="left:1882px;top:291px;height:1237px"></div>
<div class="a vl" style="left:2118px;top:291px;height:1237px"></div>
<div class="a vl" style="left:2330px;top:291px;height:1237px"></div>
<div class="a vl" style="left:2542px;top:291px;height:1237px"></div>
<div class="a vl" style="left:2730px;top:291px;height:1237px"></div>
<div class="a vl" style="left:2918px;top:291px;height:1237px"></div>
<div class="a" style="left:2937px;top:355.5px;width:10px;height:286.5px;border-radius:5px;background:#c8c8c8"></div>
<div class="a" style="left:0;top:1528.5px;width:2948px;height:64px;background:#fff"></div>
<div class="a" style="left:0;top:1551px;width:2948px;height:2.8px;overflow:hidden"><div class="a" style="left:2310px;top:0;width:170px;height:40px;border:2px solid #dcdfe6;border-radius:5px"></div><div class="a" style="left:2521px;top:0;width:53px;height:40px;background:#f4f4f5;border-radius:3.3px"></div><div class="a" style="left:2594.5px;top:0;width:53.5px;height:40px;background:#1890ff;border-radius:3.3px"></div><div class="a" style="left:2668px;top:0;width:53.5px;height:40px;background:#f4f4f5;border-radius:3.3px"></div><div class="a" style="left:2830px;top:0;width:75px;height:40px;border:2px solid #dcdfe6;border-radius:5px"></div></div>
<div class="a" style="left:0;top:1554px;width:2948px;height:38px;background:linear-gradient(to bottom,rgba(0,0,0,0),rgba(0,0,0,.011))"></div>
<div class="a" style="z-index:9;left:0;top:0;width:7px;height:1592px;background:linear-gradient(to right,rgba(0,21,41,.065),rgba(0,21,41,.02) 50%,rgba(0,21,41,0))"></div>
</body></html>
